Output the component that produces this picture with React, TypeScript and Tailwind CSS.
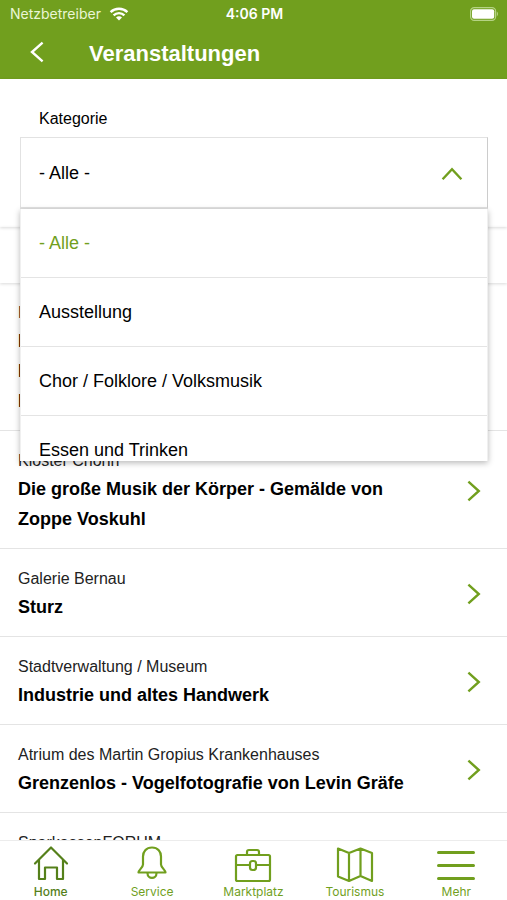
import React, { useState } from 'react';

const categories = ['- Alle -', 'Ausstellung', 'Chor / Folklore / Volksmusik', 'Essen und Trinken'];

const events = [
  { place: 'K', title: ['D', 'B', 'K'] },
  { place: 'Kloster Chorin', title: ['Die große Musik der Körper - Gemälde von', 'Zoppe Voskuhl'] },
  { place: 'Galerie Bernau', title: ['Sturz'] },
  { place: 'Stadtverwaltung / Museum', title: ['Industrie und altes Handwerk'] },
  { place: 'Atrium des Martin Gropius Krankenhauses', title: ['Grenzenlos - Vogelfotografie von Levin Gräfe'] },
  { place: 'SparkassenFORUM', title: [] },
];

const StatusBar: React.FC = () => {
  return (
    <div className="grid h-7 grid-cols-3 items-center pr-2 pl-[10px] font-['Inter',sans-serif] text-sm text-[#eaf6d5]">
      <div className="flex items-center gap-2">
        <span>Netzbetreiber</span>
        <svg width="20" height="14" viewBox="0 0 20 14" fill="none" stroke="white" strokeWidth="2.4">
          <path d="M1.6 5.2a12 12 0 0 1 16.8 0" />
          <path d="M4.6 8.4a7.6 7.6 0 0 1 10.8 0" />
          <path d="M10 13.6 7 10.6a4.2 4.2 0 0 1 6 0z" fill="white" stroke="none" />
        </svg>
      </div>
      <span className="text-center font-semibold text-white">4:06 PM</span>
      <svg className="justify-self-end" width="29" height="14" viewBox="0 0 29 14">
        <rect x="0.6" y="0.6" width="25" height="12.8" rx="3.6" fill="none" stroke="#b5d384" strokeWidth="1.2" />
        <rect x="2" y="2.2" width="22.2" height="9.6" rx="2" fill="white" />
        <path d="M26.8 4.6a3 3 0 0 1 0 4.8z" fill="#b5d384" />
      </svg>
    </div>
  );
};

const Header: React.FC = () => {
  return (
    <header className="shrink-0 bg-[#719f1e] text-white">
      <StatusBar />
      <div className="flex h-[51px] items-center pb-1 pl-6">
        <button type="button" aria-label="Zurück" className="flex h-8 w-[65px] items-center pl-1">
          <svg width="18" height="22" viewBox="0 0 18 22" fill="none" stroke="white" strokeWidth="2.4">
            <path d="M14.6 1.6 4 11l10.6 9.4" />
          </svg>
        </button>
        <h1 className="pt-1 text-[22px] leading-8 font-bold">Veranstaltungen</h1>
      </div>
    </header>
  );
};

const CategoryFilter: React.FC = () => {
  const [category, setCategory] = useState(categories[0]);

  return (
    <section className="relative z-10 h-[148px] shrink-0 pt-[26px] pr-[19px] pl-5 shadow-[0_1px_3px_rgba(0,0,0,0.15)]">
      <label htmlFor="kategorie" className="block pl-[19px] text-base leading-7">
        Kategorie
      </label>
      <div className="relative mt-1">
        <select
          id="kategorie"
          value={category}
          onChange={(e) => setCategory(e.target.value)}
          className="h-[72px] w-full appearance-none border border-b-2 border-[#e2e2e2] border-r-[#cccccc] bg-white px-[18px] text-lg outline-none"
        >
          {categories.map((name) => (
            <option key={name}>{name}</option>
          ))}
        </select>
        <svg
          className="pointer-events-none absolute top-[29px] right-[25px]"
          width="22"
          height="15"
          viewBox="0 0 22 15"
          fill="none"
          stroke="#719f1e"
          strokeWidth="2.4"
        >
          <path d="M1.6 13.2 11 3.2l9.4 10" />
        </svg>
        <ul className="absolute top-full left-0 max-h-[252px] w-full overflow-hidden border-x border-[#f0f0f0] bg-white shadow-[0_2px_6px_rgba(0,0,0,0.28)]">
          {categories.map((name) => (
            <li key={name} className="border-b border-[#e4e4e4]">
              <button
                type="button"
                onClick={() => setCategory(name)}
                className={`block h-[68px] w-full px-[18px] text-left text-lg ${name === category ? 'text-[#719f1e]' : ''}`}
              >
                {name}
              </button>
            </li>
          ))}
        </ul>
      </div>
    </section>
  );
};

const EventList: React.FC = () => {
  return (
    <ul className="min-h-0 flex-1 overflow-hidden">
      {events.map((event) => (
        <li key={event.place} className="border-b border-[#e4e4e4]">
          <a href="#event" className="flex items-center justify-between pt-[17px] pr-[26px] pb-[14px] pl-[18px]">
            <div>
              <p className="text-base leading-[26px] text-[#222222]">{event.place}</p>
              <h2 className="min-h-[30px] text-lg leading-[30px] font-bold">
                {event.title.map((line) => (
                  <span key={line} className="block">
                    {line}
                  </span>
                ))}
              </h2>
            </div>
            <svg width="14" height="22" viewBox="0 0 14 22" fill="none" stroke="#719f1e" strokeWidth="2.4">
              <path d="M1.4 1.6 11.8 11 1.4 20.4" />
            </svg>
          </a>
        </li>
      ))}
    </ul>
  );
};

const navItems = [
  {
    label: 'Home',
    icon: <path d="M2 18.5 18 2.5l16 16M6 15v19h6V22.5h12V34h6V15" />,
  },
  {
    label: 'Service',
    icon: (
      <>
        <path d="M18 2.5c-6 0-9 4.6-9 9v8c0 3-4.5 5.5-4.5 8h27c0-2.5-4.5-5-4.5-8v-8c0-4.4-3-9-9-9z" />
        <path d="M13.5 28c0 6.6 9 6.6 9 0" />
      </>
    ),
  },
  {
    label: 'Marktplatz',
    icon: (
      <>
        <rect x="1" y="10" width="34" height="26" rx="1.5" />
        <path d="M12 10V7q0-2 2-2h8q2 0 2 2v3M1 20h13.5M21.5 20H35" />
        <rect x="15" y="16" width="6" height="9" rx="2.5" />
      </>
    ),
  },
  {
    label: 'Tourismus',
    icon: <path d="M1 3.5 12 8l11.5-4.5L35 8v28l-11.5-5L12 36 1 31.5zM12 8v28M23.5 3.5V31" />,
  },
  {
    label: 'Mehr',
    icon: <path d="M.5 7.5h35M.5 20.5h35M.5 33.5h35" strokeWidth="3" />,
  },
];

const BottomNav: React.FC = () => {
  return (
    <nav className="grid h-[60px] shrink-0 grid-cols-5 border-t border-[#ececec] bg-white font-['Inter',sans-serif]">
      {navItems.map((item) => (
        <a
          key={item.label}
          href={`#${item.label}`}
          className={`flex flex-col items-center gap-[3px] pt-1 text-xs leading-4 ${
            item.label === 'Home' ? 'font-medium text-[#55801a]' : 'text-[#719f1e]'
          }`}
        >
          <svg
            className="overflow-visible"
            width="36"
            height="36"
            viewBox="0 0 36 36"
            fill="none"
            stroke="currentColor"
            strokeWidth="2.2"
            strokeLinecap="round"
            strokeLinejoin="round"
          >
            {item.icon}
          </svg>
          {item.label}
        </a>
      ))}
    </nav>
  );
};

const App: React.FC = () => {
  return (
    <div className="flex h-screen flex-col bg-white font-['Liberation_Sans',sans-serif] text-black">
      <Header />
      <CategoryFilter />
      <div className="h-14 shrink-0 shadow-[0_1px_3px_rgba(0,0,0,0.15)]" />
      <EventList />
      <BottomNav />
    </div>
  );
};

export default App;
